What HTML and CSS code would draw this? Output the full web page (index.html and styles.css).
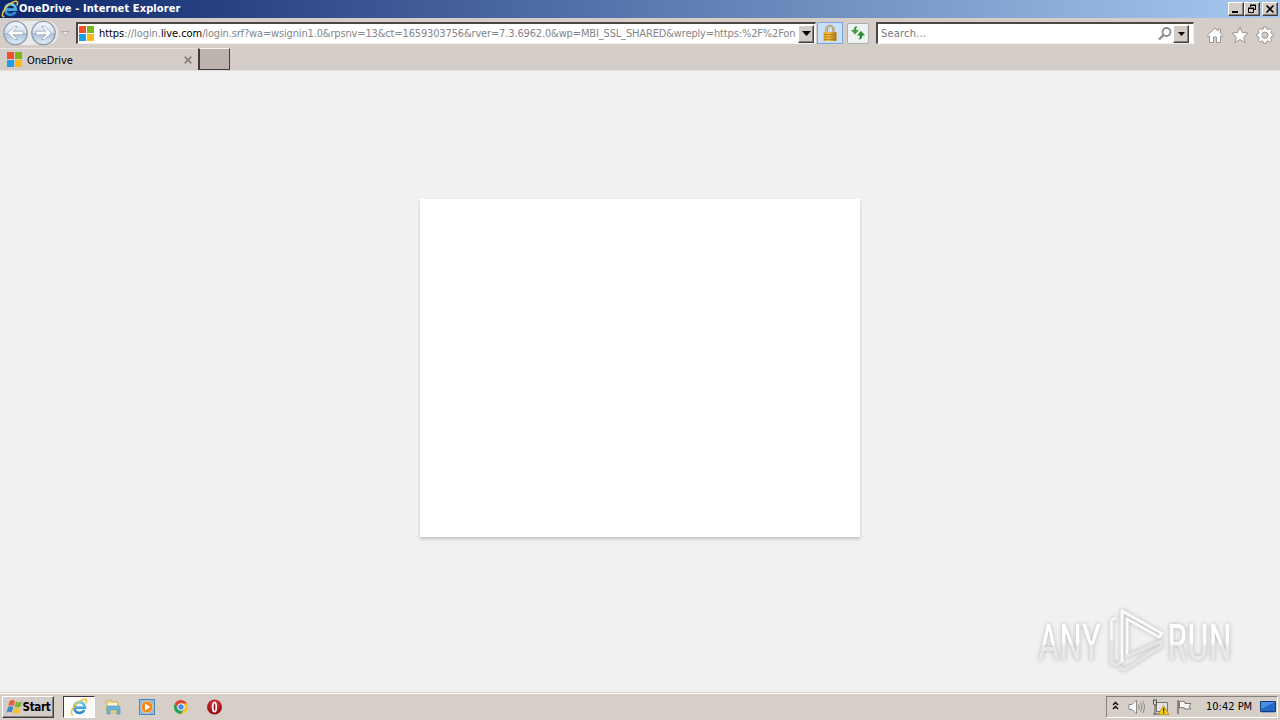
FILE: index.html
```html
<!DOCTYPE html>
<html lang="en">
<head>
    <meta charset="UTF-8">
    <title>OneDrive - Internet Explorer</title>
    <link rel="stylesheet" href="styles.css">
</head>
<body>
    <svg class="defs" width="0" height="0">
        <defs>
            <linearGradient id="glass" x1="0" y1="0" x2="0" y2="1">
                <stop offset="0" stop-color="#f4f8fd"/>
                <stop offset=".48" stop-color="#d5e0ef"/>
                <stop offset=".52" stop-color="#a9bdd6"/>
                <stop offset="1" stop-color="#e2f4fb"/>
            </linearGradient>
            <linearGradient id="gold" x1="0" y1="0" x2="1" y2="0">
                <stop offset="0" stop-color="#e0a42c"/>
                <stop offset=".4" stop-color="#f0c24a"/>
                <stop offset="1" stop-color="#b3730f"/>
            </linearGradient>
            <linearGradient id="blue" x1="0" y1="0" x2="0" y2="1">
                <stop offset="0" stop-color="#6bcdf7"/>
                <stop offset="1" stop-color="#2a86d4"/>
            </linearGradient>
            <radialGradient id="red" cx=".5" cy=".3" r=".7">
                <stop offset="0" stop-color="#e8343a"/>
                <stop offset="1" stop-color="#8c0a10"/>
            </radialGradient>
            <linearGradient id="mark" x1="0" y1="0" x2="0" y2="1">
                <stop offset=".5" stop-color="#ffffff"/>
                <stop offset=".56" stop-color="#e8e8e8"/>
            </linearGradient>
            <symbol id="ie" viewBox="0 0 18 18">
                <path d="M14.300 12a5.400 5.400 0 1 1 .6-2.300H5" fill="none" stroke="url(#blue)" stroke-width="2.700"/>
                <path d="M3.400 16.600C.2 17 .7 12.300 5 7.400 9.400 2.500 15 .2 16.300 2c.6.9.2 2.200-.6 3.500" fill="none" stroke="#f0c534" stroke-width="1.500"/>
            </symbol>
            <symbol id="ms" viewBox="0 0 15 15">
                <path d="M0 0h7v7H0z" fill="#f04e23"/>
                <path d="M8 0h7v7H8z" fill="#7cb814"/>
                <path d="M0 8h7v7H0z" fill="#1ba0e8"/>
                <path d="M8 8h7v7H8z" fill="#fdb813"/>
            </symbol>
        </defs>
    </svg>

    <header class="title-bar">
        <svg class="title-icon" width="18" height="18"><use href="#ie"/></svg>
        <h1 class="title-text">OneDrive - Internet Explorer</h1>
        <div class="window-buttons">
            <button class="win-btn"><svg width="12" height="10"><path d="M2 8h6" stroke="#000" stroke-width="2"/></svg></button>
            <button class="win-btn"><svg width="12" height="10"><path d="M4.500 3V1.500h5v4H8M4 1.500h6" fill="none" stroke="#000"/><path d="M2.500 4.500h5v4h-5zM2 4.500h6M4 1h6M2 4h6" fill="none" stroke="#000"/></svg></button>
            <button class="win-btn close"><svg width="12" height="10"><path d="M2.500 1.500l7 7m0-7l-7 7" stroke="#000" stroke-width="1.600"/></svg></button>
        </div>
    </header>

    <nav class="toolbar">
        <svg class="nav-arrows" width="72" height="30">
            <path d="M12 3h34c8 0 12 5 12 12s-4 12-12 12H12z" fill="#ebe9e8"/>
            <circle cx="15.500" cy="15" r="11.700" fill="url(#glass)" stroke="#8d9bad" stroke-width="1.300"/>
            <circle cx="43.500" cy="15" r="11.700" fill="url(#glass)" stroke="#8d9bad" stroke-width="1.300"/>
            <path d="M7.500 15l7-6.500h3L13 13.200h10v3.600H13l4.500 4.700h-3z" fill="#fff" stroke="#9aabc0" stroke-width=".8"/>
            <path d="M51.500 15l-7-6.500h-3l4.500 4.700H36v3.600h10l-4.500 4.700h3z" fill="#fff" stroke="#9aabc0" stroke-width=".8"/>
            <path d="M61.500 13.500h8l-4 4.500z" fill="#e6e1de" stroke="#b2aca8"/>
        </svg>
        <div class="field address">
            <svg width="15" height="15"><use href="#ms"/></svg>
            <div class="url"><b>https</b><span class="scheme">://login.</span><b class="domain">live.com</b><span class="query">/login.srf?wa=wsignin1.0&amp;rpsnv=13&amp;ct=1659303756&amp;rver=7.3.6962.0&amp;wp=MBI_SSL_SHARED&amp;wreply=https:%2F%2Fon</span></div>
            <button class="drop"><svg width="9" height="5"><path d="M0 0h9L4.500 5z"/></svg></button>
        </div>
        <div class="lock">
            <svg width="16" height="18">
                <path d="M4.500 9V5.500a3.500 3.500 0 0 1 7 0V9" fill="none" stroke="#a1834a" stroke-width="2.200"/>
                <path d="M4.500 9V5.500a3.500 3.500 0 0 1 7 0V9" fill="none" stroke="#ecd9a0" stroke-width=".8"/>
                <rect x="1.500" y="8" width="13" height="9" fill="url(#gold)"/>
                <path d="M2 10.500h12M2 13h12M2 15.500h12" stroke="#b0741a" stroke-width=".8"/>
            </svg>
        </div>
        <div class="refresh">
            <svg width="18" height="16">
                <path d="M8.500 1C6 1 4.700 2.500 4.700 5H2l4 4.500L10 5H7.200c0-2 .3-3 1.300-4z" fill="#3fa23d"/>
                <path d="M9.500 14.500c2.500 0 3.800-1.500 3.800-4H16L12 6l-4 4.500h2.800c0 2-.3 3-1.300 4z" fill="#248c2b"/>
            </svg>
        </div>
        <div class="field search">
            <span class="placeholder">Search...</span>
            <svg width="16" height="16">
                <circle cx="9.500" cy="6" r="4" fill="none" stroke="#8b8b90" stroke-width="1.800"/>
                <path d="M6.500 9l-4.500 4.500" stroke="#8b8b90" stroke-width="2.400"/>
            </svg>
            <button class="drop"><svg width="7" height="4"><path d="M0 0h7L3.500 4z"/></svg></button>
        </div>
        <div class="tools">
            <svg width="18" height="18"><path d="M1 9.500L9 2l3 2.800V3h2.500v4.300L17 9.500l-1.200 1.300-1.300-1V16.500h-4V11h-3v5.500h-4V9.800l-1.300 1z" fill="#fff" stroke="#9b9794"/></svg>
            <svg width="18" height="18"><path d="M9 1l2.300 5.500 5.900.5-4.500 3.900 1.500 5.800L9 13.600l-5.200 3.100 1.500-5.800L.8 7l5.900-.5z" fill="#fff" stroke="#9b9794"/></svg>
            <svg width="18" height="18">
                <path d="M7.500 1h3l.4 2.200 1.300.5L14 2.400 16 4.500l-1.300 1.800.5 1.300 2 .4v2.500l-2 .5-.5 1.300 1.200 1.800-2 2-1.800-1.200-1.300.5-.4 2h-2.900l-.4-2-1.300-.5L4 16.100l-2-2 1.200-1.800L2.700 11l-2-.5V8l2-.4.5-1.300L2 4.500l2-2.100 1.700 1.300 1.400-.5z" fill="#fff" stroke="#9b9794"/>
                <circle cx="9" cy="9.200" r="3.100" fill="#d5cec8" stroke="#9b9794"/>
            </svg>
        </div>
    </nav>

    <div class="tabs">
        <div class="tab">
            <svg width="15" height="15"><use href="#ms"/></svg>
            <span class="tab-title">OneDrive</span>
            <svg class="tab-close" width="8" height="8"><path d="M.7.7l6.600 6.600m0-6.600L.7 7.300" stroke="#85807d" stroke-width="1.700"/></svg>
        </div>
        <div class="new-tab"></div>
    </div>

    <main class="page">
        <div class="card"></div>
        <svg class="watermark" width="230" height="80">
            <g class="mark-text" fill="url(#mark)">
                <text transform="translate(18 59.500) scale(.74 1)">ANY</text>
                <text transform="translate(147 59.500) scale(.76 1)">RUN</text>
            </g>
            <g class="mark-logo" fill="none" stroke-linejoin="round" stroke-linecap="round">
                <path d="M91.500 63V20l4-2" stroke="#fafafa" stroke-width="2.500"/>
                <path d="M91.500 42v21l5 2 6-4" stroke="#e6e6e6" stroke-width="3"/>
                <path d="M102 61V11l40 22.500-3 3.500-32-18v37" stroke="#fafafa" stroke-width="3"/>
                <path d="M107 56l35-15-1 5-37 24-4-3" stroke="#e4e4e4" stroke-width="3"/>
            </g>
        </svg>
    </main>

    <footer class="taskbar">
        <button class="start">
            <svg width="17" height="16">
                <path d="M3.600 2c2.200-1.500 3.700-1.200 5.300-.1L7.500 7.200c-1.500-1-3-1.200-5.200 0z" fill="#e9602a"/>
                <path d="M9.800 2.400c2 1 3.800 1 6.400-.2l-1.500 5.300c-2.200 1.300-4.200 1.200-6.300.1z" fill="#7eb83a"/>
                <path d="M2 8.200c2.200-1.200 3.700-1 5.200 0L5.800 13.500c-1.500-1-3-1.200-5.200 0z" fill="#3a86d0"/>
                <path d="M8.200 8.700c2 1 3.800 1 6.200-.1l-1.500 5.300c-2 1.200-4 1.200-6.100.1z" fill="#f6c52c"/>
            </svg>
            <span>Start</span>
        </button>
        <div class="quick-launch">
            <div class="task active"><svg width="18" height="18"><use href="#ie"/></svg></div>
            <div class="task">
                <svg width="18" height="18">
                    <path d="M2 3l5-1 1 1.500h6L15 15H3z" fill="#efd47c" stroke="#c9aa52" stroke-width=".6"/>
                    <path d="M4 5h9v3H4z" fill="#fff8d5"/>
                    <path d="M3 16V9.500q0-1.500 1.500-1.500h10Q16 8 16 9.500V16h-3v-4H6v4z" fill="#68b6dc" stroke="#4691bd" stroke-width=".6"/>
                </svg>
            </div>
            <div class="task">
                <svg width="18" height="18">
                    <rect x="1.500" y="1.500" width="15" height="15" fill="#8fbce2" stroke="#4a86bd"/>
                    <circle cx="9" cy="9" r="5.900" fill="#f08a1c" stroke="#f5cb92"/>
                    <path d="M7 5.500v7L12.500 9z" fill="#fff"/>
                </svg>
            </div>
            <div class="task">
                <svg width="18" height="18">
                    <circle cx="9" cy="9" r="7" fill="#f5c52b"/>
                    <path d="M2.900 5.500a7 7 0 0 1 12.200 0H9l-3 5z" fill="#dd4437"/>
                    <path d="M2.900 5.500A7 7 0 0 0 9 16l3-5H6z" fill="#22a160"/>
                    <circle cx="9" cy="9" r="3.300" fill="#4688ec" stroke="#fff" stroke-width="1"/>
                </svg>
            </div>
            <div class="task">
                <svg width="18" height="18">
                    <circle cx="8.500" cy="9" r="7.500" fill="url(#red)"/>
                    <ellipse cx="8.500" cy="9" rx="1.800" ry="4.700" fill="#9e1218" stroke="#fff" stroke-width="1.800"/>
                </svg>
            </div>
        </div>
        <div class="tray">
            <svg class="chevrons" width="7" height="10"><path d="M1 4l2.500-2.500L6 4M1 8l2.500-2.500L6 8" fill="none" stroke="#000" stroke-width="1.400"/></svg>
            <svg class="speaker" width="18" height="16">
                <path d="M1 5.500h3L8.500 1v14L4 10.500H1z" fill="#fafafa" stroke="#8c8987"/>
                <path d="M10.500 5.500q1.500 2.500 0 5M12.500 3.500q3 4.500 0 9M14.500 2q4 6 0 12" fill="none" stroke="#8c8987"/>
            </svg>
            <svg class="network" width="18" height="16">
                <path d="M4.500 3.500h11v9h-11z" fill="#e4e4e2" stroke="#77736f"/>
                <path d="M1.500 1v4q0 1 1.500 1t1.500-1V1M3 6v9M1 15h7M1 1h4" fill="none" stroke="#55524f"/>
                <path d="M11.500 6.500L17 15.500H6.500z" fill="#f7cd1c" stroke="#bd920e" stroke-width=".8"/>
                <path d="M11.700 9v3.500M11.700 13.300v1.200" stroke="#222" stroke-width="1.200"/>
            </svg>
            <svg class="flag" width="17" height="16">
                <path d="M2 1v14" stroke="#77736f" stroke-width="1.600"/>
                <path d="M3.500 2.500q3-1 5.500.5v1.500h6l-2 3 2 2.500H8.500V9q-2.500-1-5 0z" fill="#fafafa" stroke="#77736f"/>
            </svg>
            <time class="clock">10:42 PM</time>
            <svg class="desktop" width="16" height="13">
                <path d="M.5.5h15v10H.5z" fill="#2468c8" stroke="#163b78"/>
                <path d="M1 1h14L1 8z" fill="#4a91e2"/>
                <path d="M1 11.500h14" stroke="#8cb0d5"/>
            </svg>
        </div>
    </footer>
</body>
</html>
```
FILE: styles.css
```css
* {
    margin: 0;
    padding: 0;
    box-sizing: border-box;
}

body {
    width: 1280px;
    height: 720px;
    display: flex;
    flex-direction: column;
    overflow: hidden;
    background: #d5cec8;
    color: #000;
    font-family: "DejaVu Sans Condensed", "DejaVu Sans", sans-serif;
    font-stretch: condensed;
    font-size: 11px;
    line-height: 14px;
    white-space: nowrap;
}

svg {
    display: block;
    flex: none;
}

.defs {
    position: absolute;
}

button {
    border: 1px solid;
    border-color: #fff #404040 #404040 #fff;
    box-shadow: inset -1px -1px #87827d;
    background: #d4cdc7;
    font: inherit;
    display: flex;
    align-items: center;
    justify-content: center;
}

/* title bar */
.title-bar {
    height: 18px;
    flex: none;
    display: flex;
    align-items: center;
    padding: 0 2px 0 1px;
    background: linear-gradient(to right, #0d266c, #a6caf0);
}

.title-text {
    color: #fff;
    font-size: 11px;
    font-weight: bold;
    letter-spacing: 0.1px;
}

.window-buttons {
    display: flex;
    margin-left: auto;
}

.win-btn {
    width: 16px;
    height: 14px;
}

.win-btn.close {
    margin-left: 2px;
}

/* address row */
.toolbar {
    height: 30px;
    flex: none;
    display: flex;
    align-items: flex-start;
}

.field {
    height: 22px;
    margin-top: 4px;
    display: flex;
    align-items: center;
    background: #fff;
    border: 2px solid;
    border-width: 2px 1px 1px 2px;
    border-color: #4e4645 #f4f1ef #f4f1ef #4e4645;
}

.address {
    width: 740px;
    margin-left: 4px;
    padding: 0 1px;
}

.url {
    width: 697px;
    margin-left: 5px;
    overflow: hidden;
    color: #85858a;
    letter-spacing: -0.06px;
}

.url b {
    color: #000;
    font-weight: normal;
}

.query {
    letter-spacing: -0.15px;
}

.drop {
    width: 16px;
    height: 18px;
    margin-left: auto;
}

.lock {
    width: 26px;
    height: 22px;
    margin: 4px 0 0 1px;
    padding: 1px 4px;
    border: 1px solid #7da7df;
    background: #c9dffa;
}

.refresh {
    width: 22px;
    height: 21px;
    margin: 5px 0 0 4px;
    padding: 1px;
    border: 1px solid #b0aeb1;
    border-radius: 2px;
    background: #edf2f4;
}

.search {
    width: 318px;
    margin-left: 7px;
    padding: 0 4px 0 3px;
}

.placeholder {
    flex: 1;
    color: #77777b;
    letter-spacing: 0.2px;
}

.search svg + .drop {
    margin-left: 0;
}

.tools {
    display: flex;
    gap: 7px;
    margin: 8px 0 0 12px;
}

/* tabs */
.tabs {
    height: 23px;
    flex: none;
    display: flex;
    border-bottom: 1px solid #e2dedb;
}

.tab {
    width: 198px;
    display: flex;
    align-items: center;
    padding: 0 6px 0 7px;
    border-top: 1px solid #e8e4e1;
}

.tab-title {
    margin: 2px 0 0 5px;
    letter-spacing: -0.1px;
}

.tab-close {
    margin: 1px 0 0 auto;
}

.new-tab {
    width: 32px;
    border: 1px solid;
    border-width: 1px 1px 1px 2px;
    border-color: #f4f1ef #403b39 #403b39 #403b39;
    background: #bcb3ae;
}

/* page */
.page {
    flex: 1;
    position: relative;
    display: flex;
    justify-content: center;
    padding-top: 128px;
    background: #f1f1f1;
}

.card {
    width: 440px;
    height: 338px;
    background: #fff;
    box-shadow: 0 2px 3px rgba(0, 0, 0, 0.2);
}

.watermark {
    position: absolute;
    right: 30px;
    bottom: 12px;
    overflow: visible;
    filter: drop-shadow(0 0 2px rgba(0, 0, 0, 0.25));
}

.mark-text {
    font-family: Roboto, sans-serif;
    font-size: 50px;
    font-weight: 400;
}

/* taskbar */
.taskbar {
    height: 28px;
    flex: none;
    display: flex;
    align-items: center;
    padding: 1px 2px 0 2px;
    border-top: 1px solid #d6cfc9;
    box-shadow: inset 0 1px #fff;
    background: #d5cfc8;
}

.start {
    width: 52px;
    height: 22px;
    font-size: 11.5px;
    font-weight: bold;
    letter-spacing: -0.3px;
}

.quick-launch {
    display: flex;
    margin-left: 9px;
    gap: 2px;
}

.task {
    width: 32px;
    height: 22px;
    display: flex;
    align-items: center;
    justify-content: center;
}

.task.active {
    background: #fcfbfa;
    border: 1px solid;
    border-color: #403b39 #fff #fff #403b39;
}

.tray {
    width: 172px;
    height: 22px;
    margin-left: auto;
    display: flex;
    align-items: center;
    padding-left: 5px;
    border: 1px solid;
    border-color: #85807b #fff #fff #85807b;
}

.chevrons {
    margin-bottom: 2px;
}

.speaker {
    margin-left: 9px;
}

.network {
    margin-left: 6px;
}

.flag {
    margin-left: 6px;
}

.clock {
    width: 46px;
    margin-left: 13px;
}

.desktop {
    margin-left: 8px;
}
```
